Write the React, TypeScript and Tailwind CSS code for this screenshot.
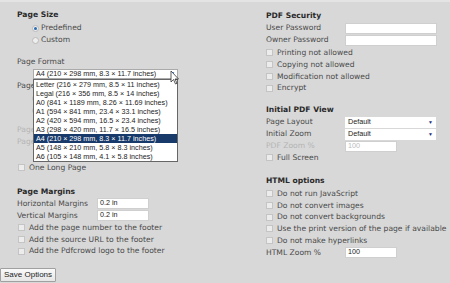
import React from 'react';

const lbl = "font-['DejaVu_Sans',sans-serif] text-[7.6px] text-[#4a4a4a]";
const head = "font-['DejaVu_Sans',sans-serif] text-[7.6px] font-bold text-[#2a2a2a]";
const ctl = "font-['Liberation_Sans',Arial,sans-serif] text-[7.2px] text-[#222]";

const Check = ({ label, disabled }: { label: string; disabled?: boolean }) => (
  <div className="flex items-center h-[11.75px]">
    <span className="w-[7px] h-[7px] border border-[#c4c4c4] bg-[#ececec] mr-[4px] shrink-0" />
    <span className={lbl + (disabled ? ' text-[#aaa]' : '')}>{label}</span>
  </div>
);

const Radio = ({ label, on }: { label: string; on?: boolean }) => (
  <div className="flex items-center h-[12px] pl-[15px]">
    <span className="w-[7px] h-[7px] rounded-full border border-[#bbb] bg-[#eee] mr-[2px] flex items-center justify-center shrink-0">
      {on && <span className="w-[3px] h-[3px] rounded-full bg-[#2a6bb0]" />}
    </span>
    <span className={lbl}>{label}</span>
  </div>
);

const Field = ({ label, value, w = 'w-[52px]', disabled, labelW = 'w-[80px]' }: any) => (
  <div className="flex items-center h-[12px]">
    <span className={`${lbl} ${labelW} shrink-0 ${disabled ? 'text-[#b4b4b4]' : ''}`}>{label}</span>
    <span className={`${w} h-[11px] bg-white border border-[#cfcfcf] flex items-center px-[2px] ${ctl} ${disabled ? 'text-[#bbb] bg-[#e2e2e2]' : ''}`}>{value}</span>
  </div>
);

const Sel = ({ label, value }: { label: string; value: string }) => (
  <div className="flex items-center h-[12px]">
    <span className={`${lbl} w-[79px] shrink-0`}>{label}</span>
    <span className={`w-[91px] h-[11px] bg-white flex items-center justify-between px-[3px] ${ctl}`}>
      {value}
      <span className="text-[#1d2f7a] text-[5px] leading-none">▼</span>
    </span>
  </div>
);

const formats = [
  'Letter (216 × 279 mm, 8.5 × 11 inches)',
  'Legal (216 × 356 mm, 8.5 × 14 inches)',
  'A0 (841 × 1189 mm, 8.26 × 11.69 inches)',
  'A1 (594 × 841 mm, 23.4 × 33.1 inches)',
  'A2 (420 × 594 mm, 16.5 × 23.4 inches)',
  'A3 (298 × 420 mm, 11.7 × 16.5 inches)',
  'A4 (210 × 298 mm, 8.3 × 11.7 inches)',
  'A5 (148 × 210 mm, 5.8 × 8.3 inches)',
  'A6 (105 × 148 mm, 4.1 × 5.8 inches)',
];

export default function App() {
  return (
    <div className="w-[450px] h-[283px] bg-[#d8d8d8] border-t-[2px] border-[#e4e4e4] relative overflow-hidden">
      <div className="flex">
        {/* left column */}
        <div className="w-[266px] pl-[17px] pt-[7px]">
          <div className={`${head} h-[12px] flex items-center`}>Page Size</div>
          <div className="mt-[1px]">
            <Radio label="Predefined" on />
            <Radio label="Custom" />
          </div>
          <div className={`${lbl} h-[12px] flex items-center mt-[10px]`}>Page Format</div>
          <div className="relative pl-[16px] h-[12px] flex items-center">
            <span className={`w-[145px] h-[10px] bg-white border border-[#aaa] flex items-center justify-between pl-[2px] ${ctl}`}>
              A4 (210 × 298 mm, 8.3 × 11.7 inches)
              <span className="w-[9px] h-full flex items-center justify-center text-[#1d2f7a] text-[5px]">▼</span>
            </span>
            {/* open dropdown */}
            <div className="absolute left-[16px] top-[11px] w-[145px] bg-white border border-[#666] z-10">
              {formats.map((f, i) => (
                <div key={i} className={`${ctl} h-[9px] leading-[9px] pl-[2px] ${i === 6 ? 'bg-[#173a6b] text-white' : ''}`}>{f}</div>
              ))}
            </div>
            {/* cursor */}
            <svg className="absolute left-[153px] top-[2px] z-20" width="10" height="15" viewBox="0 0 10 15">
              <path d="M1 1 L1 12 L3.5 9.5 L5.5 14 L7 13.3 L5 9 L8.5 9 Z" fill="#fff" stroke="#333" strokeWidth="0.8" />
            </svg>
          </div>
          <div className={`${lbl} h-[12px] flex items-center`}>Page Orientation</div>
          <Radio label="Portrait" on />
          <Radio label="Landscape" />
          <div className="mt-[8px]">
            <Field label="Page Width" value="8.3 in" disabled />
            <Field label="Page Height" value="11.7 in" disabled />
          </div>
          <div className="mt-[14px] pl-[1px]">
            <Check label="One Long Page" />
          </div>
          <div className={`${head} h-[12px] flex items-center mt-[12px]`}>Page Margins</div>
          <Field label="Horizontal Margins" value="0.2 in" />
          <Field label="Vertical Margins" value="0.2 in" />
          <div className="pl-[1px]">
            <Check label="Add the page number to the footer" />
            <Check label="Add the source URL to the footer" />
            <Check label="Add the Pdfcrowd logo to the footer" />
          </div>
        </div>

        {/* right column */}
        <div className="pt-[8px]">
          <div className={`${head} h-[12px] flex items-center`}>PDF Security</div>
          <Field label="User Password" value="" w="w-[92px]" labelW="w-[79px]" />
          <Field label="Owner Password" value="" w="w-[92px]" labelW="w-[79px]" />
          <div className="mt-[1px]">
            <Check label="Printing not allowed" />
            <Check label="Copying not allowed" />
            <Check label="Modification not allowed" />
            <Check label="Encrypt" />
          </div>
          <div className={`${head} h-[12px] flex items-center mt-[10px]`}>Initial PDF View</div>
          <Sel label="Page Layout" value="Default" />
          <Sel label="Initial Zoom" value="Default" />
          <Field label="PDF Zoom %" value="100" disabled labelW="w-[79px]" />
          <Check label="Full Screen" />
          <div className={`${head} h-[12px] flex items-center mt-[11px]`}>HTML options</div>
          <div className="mt-[1px]">
            <Check label="Do not run JavaScript" />
            <Check label="Do not convert images" />
            <Check label="Do not convert backgrounds" />
            <Check label="Use the print version of the page if available" />
            <Check label="Do not make hyperlinks" />
          </div>
          <Field label="HTML Zoom %" value="100" labelW="w-[79px]" />
        </div>
      </div>

      <div className="absolute left-0 bottom-0">
        <button className={`${ctl} h-[14px] px-[3px] border border-[#a0a0a0] rounded-[1px] bg-gradient-to-b from-[#fafafa] to-[#e6e6e6] text-[#111] text-[8px]`}>
          Save Options
        </button>
      </div>
    </div>
  );
}
